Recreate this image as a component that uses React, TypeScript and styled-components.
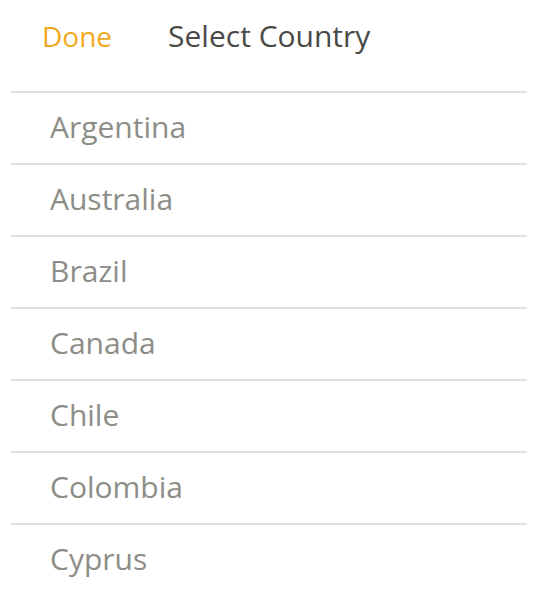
import React from "react";
import styled, { createGlobalStyle } from "styled-components";

const Global = createGlobalStyle`
  html, body { margin: 0; padding: 0; background: #ffffff; }
  body { font-family: "Open Sans", "Noto Sans", sans-serif; }
`;

const Page = styled.div`
  padding: 0 16px 0 11px;
`;

const Header = styled.div`
  display: flex;
  align-items: center;
  height: 71px;
  padding: 0 0 20px 31px;
  gap: 56px;
  border-bottom: 2px solid #e1e1dd;
`;

const DoneButton = styled.button`
  border: 0;
  background: none;
  padding: 0;
  font-family: inherit;
  font-size: 28px;
  color: #f2a81d;
  cursor: pointer;
`;

const Title = styled.h1`
  margin: 0;
  font-weight: 400;
  font-size: 30px;
  color: #4a4a48;
`;

const List = styled.ul`
  list-style: none;
  margin: 0;
  padding: 0;
`;

const Item = styled.li<{ $last?: boolean }>`
  display: flex;
  align-items: center;
  height: 66px;
  padding: 0 0 4px 39px;
  font-size: 30px;
  color: #8d8d87;
  border-bottom: ${(p) => (p.$last ? "none" : "2px solid #e1e1dd")};
`;

const countries = ["Argentina", "Australia", "Brazil", "Canada", "Chile", "Colombia", "Cyprus"];

export default function App() {
  return (
    <>
      <Global />
      <Page>
        <Header>
          <DoneButton>Done</DoneButton>
          <Title>Select Country</Title>
        </Header>
        <List>
          {countries.map((c, i) => (
            <Item key={c} $last={i === countries.length - 1}>
              {c}
            </Item>
          ))}
        </List>
      </Page>
    </>
  );
}
